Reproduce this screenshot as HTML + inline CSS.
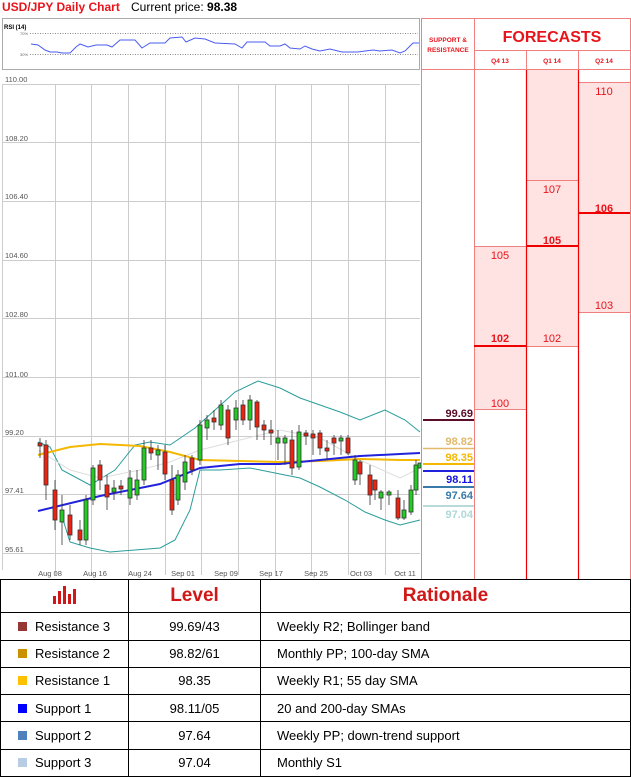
<!DOCTYPE html><html><head><meta charset="utf-8"><style>
body{margin:0;width:631px;height:777px;background:#fff;font-family:"Liberation Sans",sans-serif;position:relative;overflow:hidden}
.a{position:absolute}
table{position:absolute;left:0;top:579px;width:631px;height:198px;border-collapse:collapse;font-size:13px}
td{border:1.5px solid #000;height:26px;padding:0}
td.c{text-align:center}
.sq{display:inline-block;width:9px;height:9px;margin:0 8px 0 17px}
</style></head><body>
<div class="a" style="left:2px;top:0;font-size:12px;font-weight:bold;color:#e8141b">USD/JPY Daily Chart</div>
<div class="a" style="left:131px;top:0;font-size:12px;color:#000">Current price: <b>98.38</b></div>
<svg class="a" style="left:0;top:0" width="631" height="579">
<rect x="2.5" y="18.5" width="417" height="51" fill="#fff" stroke="#aaa"/>
<text x="4" y="29" font-size="6" font-weight="bold" font-family="Liberation Sans">RSI (14)</text>
<text x="20" y="35" font-size="4" fill="#666">70%</text><text x="20" y="56" font-size="4" fill="#666">30%</text>
<line x1="30" y1="33.5" x2="418" y2="33.5" stroke="#888" stroke-dasharray="1,1.5"/>
<line x1="30" y1="54.5" x2="418" y2="54.5" stroke="#888" stroke-dasharray="1,1.5"/>
<polyline fill="none" stroke="#4a5cf0" stroke-width="1" points="31,44 38,45 45,50 50,52 57,52 62,53 70,53 76,47 80,44 88,47 96,45 107,45 112,47 120,40 135,40 142,48 150,43 165,43 170,38 182,37 186,42 195,38 205,39 215,43 235,44 242,48 247,42 265,42 270,46 280,46 285,44 290,48 300,49 305,46 312,49 320,51 330,49 342,52 350,52 358,52 365,51 373,50 380,51 392,50 400,53 405,51 413,43 419,43"/>
<text x="5" y="82" font-size="7.5" fill="#555">110.00</text>
<text x="5" y="141" font-size="7.5" fill="#555">108.20</text>
<text x="5" y="199" font-size="7.5" fill="#555">106.40</text>
<text x="5" y="258" font-size="7.5" fill="#555">104.60</text>
<text x="5" y="317" font-size="7.5" fill="#555">102.80</text>
<text x="5" y="377" font-size="7.5" fill="#555">101.00</text>
<text x="5" y="435" font-size="7.5" fill="#555">99.20</text>
<text x="5" y="493" font-size="7.5" fill="#555">97.41</text>
<text x="5" y="552" font-size="7.5" fill="#555">95.61</text>
<g stroke="#ccc" stroke-width="1">
<line x1="2" y1="84.5" x2="420" y2="84.5"/><line x1="2" y1="142.5" x2="420" y2="142.5"/><line x1="2" y1="201.5" x2="420" y2="201.5"/><line x1="2" y1="260.5" x2="420" y2="260.5"/><line x1="2" y1="318.5" x2="420" y2="318.5"/><line x1="2" y1="377.5" x2="420" y2="377.5"/><line x1="2" y1="436.5" x2="420" y2="436.5"/><line x1="2" y1="494.5" x2="420" y2="494.5"/><line x1="2" y1="553.5" x2="420" y2="553.5"/>
<line x1="2.5" y1="84" x2="2.5" y2="570"/>
<line x1="55.5" y1="84" x2="55.5" y2="575"/><line x1="91.5" y1="84" x2="91.5" y2="575"/><line x1="128.5" y1="84" x2="128.5" y2="575"/><line x1="165.5" y1="84" x2="165.5" y2="575"/><line x1="201.5" y1="84" x2="201.5" y2="575"/><line x1="238.5" y1="84" x2="238.5" y2="575"/><line x1="275.5" y1="84" x2="275.5" y2="575"/><line x1="311.5" y1="84" x2="311.5" y2="575"/><line x1="348.5" y1="84" x2="348.5" y2="575"/><line x1="385.5" y1="84" x2="385.5" y2="575"/>
</g>
<g font-size="7.5" fill="#555" text-anchor="middle"><text x="50" y="576">Aug 08</text><text x="95" y="576">Aug 16</text><text x="140" y="576">Aug 24</text><text x="183" y="576">Sep 01</text><text x="226" y="576">Sep 09</text><text x="271" y="576">Sep 17</text><text x="316" y="576">Sep 25</text><text x="361" y="576">Oct 03</text><text x="405" y="576">Oct 11</text></g>
<polyline fill="none" stroke="#2a9d9a" points="38,442 50,447 62,470 90,485 115,470 135,445 150,442 170,445 195,428 215,410 235,392 258,381 280,388 300,398 320,405 340,412 360,420 385,410 405,420 420,432"/>
<polyline fill="none" stroke="#2a9d9a" points="60,510 70,542 90,548 110,552 135,550 160,548 175,540 190,510 200,470 220,470 250,468 280,474 300,478 320,487 345,500 365,512 385,520 400,525 420,520"/>
<polyline fill="none" stroke="#ddd" points="38,450 70,470 100,478 140,470 170,462 200,450 240,440 280,430 320,438 360,460 400,478 420,468"/>
<polyline fill="none" stroke="#f5b800" stroke-width="2" points="38,455 70,447 100,444 140,446 170,452 200,460 240,461 280,462 320,461 360,459 400,460 420,460"/>
<polyline fill="none" stroke="#2222dd" stroke-width="2" points="38,511 100,496 160,484 200,468 240,464 280,464 320,460 360,456 400,454 420,453"/>
<g stroke="#333" stroke-width="0.8">
<line x1="40" y1="438" x2="40" y2="458"/><rect x="38" y="443" width="4" height="3" fill="#e21"/>
<line x1="46" y1="440" x2="46" y2="500"/><rect x="44" y="445" width="4" height="40" fill="#e21"/>
<line x1="55" y1="480" x2="55" y2="530"/><rect x="53" y="490" width="4" height="30" fill="#e21"/>
<line x1="62" y1="495" x2="62" y2="545"/><rect x="60" y="510" width="4" height="12" fill="#2c2"/>
<line x1="70" y1="505" x2="70" y2="540"/><rect x="68" y="515" width="4" height="20" fill="#e21"/>
<line x1="80" y1="520" x2="80" y2="545"/><rect x="78" y="530" width="4" height="10" fill="#e21"/>
<line x1="86" y1="495" x2="86" y2="545"/><rect x="84" y="500" width="4" height="40" fill="#2c2"/>
<line x1="93" y1="465" x2="93" y2="505"/><rect x="91" y="468" width="4" height="32" fill="#2c2"/>
<line x1="100" y1="460" x2="100" y2="490"/><rect x="98" y="465" width="4" height="15" fill="#e21"/>
<line x1="107" y1="475" x2="107" y2="510"/><rect x="105" y="485" width="4" height="12" fill="#e21"/>
<line x1="114" y1="480" x2="114" y2="500"/><rect x="112" y="488" width="4" height="4" fill="#2c2"/>
<line x1="121" y1="480" x2="121" y2="495"/><rect x="119" y="486" width="4" height="3" fill="#e21"/>
<line x1="130" y1="470" x2="130" y2="505"/><rect x="128" y="478" width="4" height="20" fill="#2c2"/>
<line x1="137" y1="470" x2="137" y2="500"/><rect x="135" y="480" width="4" height="15" fill="#2c2"/>
<line x1="144" y1="440" x2="144" y2="485"/><rect x="142" y="448" width="4" height="32" fill="#2c2"/>
<line x1="151" y1="440" x2="151" y2="460"/><rect x="149" y="448" width="4" height="5" fill="#e21"/>
<line x1="158" y1="445" x2="158" y2="470"/><rect x="156" y="450" width="4" height="5" fill="#2c2"/>
<line x1="165" y1="445" x2="165" y2="480"/><rect x="163" y="452" width="4" height="22" fill="#e21"/>
<line x1="172" y1="465" x2="172" y2="515"/><rect x="170" y="480" width="4" height="30" fill="#e21"/>
<line x1="178" y1="470" x2="178" y2="505"/><rect x="176" y="475" width="4" height="25" fill="#2c2"/>
<line x1="185" y1="455" x2="185" y2="490"/><rect x="183" y="462" width="4" height="20" fill="#2c2"/>
<line x1="192" y1="455" x2="192" y2="475"/><rect x="190" y="458" width="4" height="12" fill="#e21"/>
<line x1="200" y1="420" x2="200" y2="465"/><rect x="198" y="425" width="4" height="35" fill="#2c2"/>
<line x1="207" y1="415" x2="207" y2="440"/><rect x="205" y="420" width="4" height="8" fill="#2c2"/>
<line x1="214" y1="410" x2="214" y2="430"/><rect x="212" y="418" width="4" height="4" fill="#e21"/>
<line x1="221" y1="400" x2="221" y2="430"/><rect x="219" y="405" width="4" height="20" fill="#2c2"/>
<line x1="228" y1="405" x2="228" y2="445"/><rect x="226" y="410" width="4" height="28" fill="#e21"/>
<line x1="236" y1="400" x2="236" y2="430"/><rect x="234" y="408" width="4" height="12" fill="#2c2"/>
<line x1="243" y1="400" x2="243" y2="425"/><rect x="241" y="405" width="4" height="15" fill="#e21"/>
<line x1="250" y1="395" x2="250" y2="430"/><rect x="248" y="400" width="4" height="20" fill="#2c2"/>
<line x1="257" y1="400" x2="257" y2="440"/><rect x="255" y="402" width="4" height="25" fill="#e21"/>
<line x1="264" y1="420" x2="264" y2="440"/><rect x="262" y="425" width="4" height="5" fill="#e21"/>
<line x1="271" y1="420" x2="271" y2="445"/><rect x="269" y="430" width="4" height="3" fill="#e21"/>
<line x1="278" y1="430" x2="278" y2="460"/><rect x="276" y="438" width="4" height="5" fill="#2c2"/>
<line x1="285" y1="435" x2="285" y2="465"/><rect x="283" y="438" width="4" height="5" fill="#2c2"/>
<line x1="292" y1="430" x2="292" y2="475"/><rect x="290" y="440" width="4" height="28" fill="#e21"/>
<line x1="299" y1="425" x2="299" y2="470"/><rect x="297" y="432" width="4" height="35" fill="#2c2"/>
<line x1="306" y1="430" x2="306" y2="445"/><rect x="304" y="433" width="4" height="3" fill="#e21"/>
<line x1="313" y1="430" x2="313" y2="455"/><rect x="311" y="434" width="4" height="4" fill="#e21"/>
<line x1="320" y1="430" x2="320" y2="455"/><rect x="318" y="433" width="4" height="15" fill="#e21"/>
<line x1="327" y1="440" x2="327" y2="460"/><rect x="325" y="448" width="4" height="3" fill="#e21"/>
<line x1="334" y1="435" x2="334" y2="455"/><rect x="332" y="438" width="4" height="5" fill="#e21"/>
<line x1="341" y1="435" x2="341" y2="455"/><rect x="339" y="438" width="4" height="3" fill="#2c2"/>
<line x1="348" y1="435" x2="348" y2="455"/><rect x="346" y="438" width="4" height="15" fill="#e21"/>
<line x1="355" y1="455" x2="355" y2="485"/><rect x="353" y="460" width="4" height="20" fill="#2c2"/>
<line x1="360" y1="460" x2="360" y2="485"/><rect x="358" y="462" width="4" height="12" fill="#e21"/>
<line x1="370" y1="465" x2="370" y2="505"/><rect x="368" y="475" width="4" height="20" fill="#e21"/>
<line x1="375" y1="480" x2="375" y2="500"/><rect x="373" y="480" width="4" height="10" fill="#e21"/>
<line x1="381" y1="490" x2="381" y2="510"/><rect x="379" y="492" width="4" height="6" fill="#2c2"/>
<line x1="389" y1="490" x2="389" y2="505"/><rect x="387" y="492" width="4" height="3" fill="#2c2"/>
<line x1="398" y1="490" x2="398" y2="520"/><rect x="396" y="498" width="4" height="20" fill="#e21"/>
<line x1="404" y1="500" x2="404" y2="520"/><rect x="402" y="510" width="4" height="8" fill="#2c2"/>
<line x1="411" y1="485" x2="411" y2="515"/><rect x="409" y="490" width="4" height="22" fill="#2c2"/>
<line x1="416" y1="460" x2="416" y2="495"/><rect x="414" y="465" width="4" height="25" fill="#2c2"/>
<rect x="418" y="463" width="3" height="5" fill="#2c2"/>
</g>
<rect x="526" y="70" width="52" height="276" fill="#ffe2e2"/>
<rect x="474" y="246" width="52" height="163" fill="#ffe2e2"/>
<rect x="578" y="82" width="52" height="230" fill="#ffe2e2"/>
<g stroke="#f08080" stroke-width="1">
<line x1="421.5" y1="18" x2="421.5" y2="579"/><line x1="474.5" y1="18" x2="474.5" y2="579"/>
<line x1="630.5" y1="18" x2="630.5" y2="579"/><line x1="421" y1="18.5" x2="631" y2="18.5"/>
<line x1="474" y1="50.5" x2="631" y2="50.5"/><line x1="421" y1="69.5" x2="631" y2="69.5"/>
<line x1="526.5" y1="50" x2="526.5" y2="70"/><line x1="578.5" y1="50" x2="578.5" y2="70"/>
<line x1="474" y1="409.5" x2="526" y2="409.5"/><line x1="526" y1="180.5" x2="578" y2="180.5"/>
<line x1="526" y1="346.5" x2="578" y2="346.5"/><line x1="578" y1="82.5" x2="630" y2="82.5"/><line x1="578" y1="312.5" x2="630" y2="312.5"/>
<line x1="474" y1="246.5" x2="526" y2="246.5"/>
</g>
<g stroke="#e00" stroke-width="1.2">
<line x1="526.5" y1="70" x2="526.5" y2="579"/><line x1="578.5" y1="70" x2="578.5" y2="579"/>
</g>
<line x1="474" y1="346" x2="526" y2="346" stroke="#e00" stroke-width="2"/>
<line x1="526" y1="246" x2="578" y2="246" stroke="#e00" stroke-width="2"/>
<line x1="578" y1="213" x2="630" y2="213" stroke="#e00" stroke-width="2"/>
<g fill="#e8141b" font-family="Liberation Sans" text-anchor="middle">
<text x="448" y="42" font-size="6.5" font-weight="bold">SUPPORT &amp;</text><text x="448" y="52" font-size="6.5" font-weight="bold">RESISTANCE</text>
<text x="552" y="42" font-size="16" font-weight="bold">FORECASTS</text>
<text x="500" y="63" font-size="6.5" font-weight="bold">Q4 13</text><text x="552" y="63" font-size="6.5" font-weight="bold">Q1 14</text><text x="604" y="63" font-size="6.5" font-weight="bold">Q2 14</text>
<g font-size="11"><text x="604" y="95">110</text><text x="552" y="193">107</text><text x="604" y="212" font-weight="bold">106</text><text x="552" y="244" font-weight="bold">105</text><text x="500" y="259">105</text><text x="604" y="309">103</text><text x="500" y="342" font-weight="bold">102</text><text x="552" y="342">102</text><text x="500" y="407">100</text></g>
</g>
<g font-family="Liberation Sans" font-size="11" font-weight="bold" text-anchor="end">
<text x="473" y="417" fill="#5a0d28">99.69</text><line x1="423" y1="420" x2="474" y2="420" stroke="#5a0d28" stroke-width="2"/>
<text x="473" y="445" fill="#e2b96a">98.82</text><line x1="423" y1="448.5" x2="474" y2="448.5" stroke="#e2b96a" stroke-width="1.5"/>
<text x="473" y="461" fill="#f5b800">98.35</text><line x1="423" y1="464" x2="474" y2="464" stroke="#f5b800" stroke-width="2"/>
<line x1="423" y1="471" x2="474" y2="471" stroke="#2222dd" stroke-width="2"/><text x="473" y="483" fill="#1414e0">98.11</text>
<line x1="423" y1="487" x2="474" y2="487" stroke="#3a7aaa" stroke-width="2"/><text x="473" y="499" fill="#3a7aaa">97.64</text>
<line x1="423" y1="506" x2="474" y2="506" stroke="#b8dada" stroke-width="2"/><text x="473" y="518" fill="#b0d8d8">97.04</text>
</g>
</svg>
<table>
<tr style="height:33px"><td style="width:127px" class="c"><svg width="26" height="18" viewBox="0 0 26 18"><g fill="#d01818"><rect x="1" y="10" width="3" height="8"/><rect x="6" y="5" width="3" height="13"/><rect x="11" y="0" width="3" height="18"/><rect x="16" y="8" width="3" height="10"/><rect x="21" y="3" width="3" height="15"/></g></svg></td>
<td style="width:131px;color:#d01818;font-size:19px;font-weight:bold" class="c">Level</td>
<td style="color:#d01818;font-size:19px;font-weight:bold" class="c">Rationale</td></tr>
<tr><td><span class="sq" style="background:#953735"></span>Resistance 3</td><td class="c">99.69/43</td><td style="padding-left:16px">Weekly R2; Bollinger band</td></tr>
<tr><td><span class="sq" style="background:#c99100"></span>Resistance 2</td><td class="c">98.82/61</td><td style="padding-left:16px">Monthly PP; 100-day SMA</td></tr>
<tr><td><span class="sq" style="background:#ffc000"></span>Resistance 1</td><td class="c">98.35</td><td style="padding-left:16px">Weekly R1; 55 day SMA</td></tr>
<tr><td><span class="sq" style="background:#0000ff"></span>Support 1</td><td class="c">98.11/05</td><td style="padding-left:16px">20 and 200-day SMAs</td></tr>
<tr><td><span class="sq" style="background:#4f81bd"></span>Support 2</td><td class="c">97.64</td><td style="padding-left:16px">Weekly PP; down-trend support</td></tr>
<tr><td><span class="sq" style="background:#b8cce4"></span>Support 3</td><td class="c">97.04</td><td style="padding-left:16px">Monthly S1</td></tr>
</table>
</body></html>
